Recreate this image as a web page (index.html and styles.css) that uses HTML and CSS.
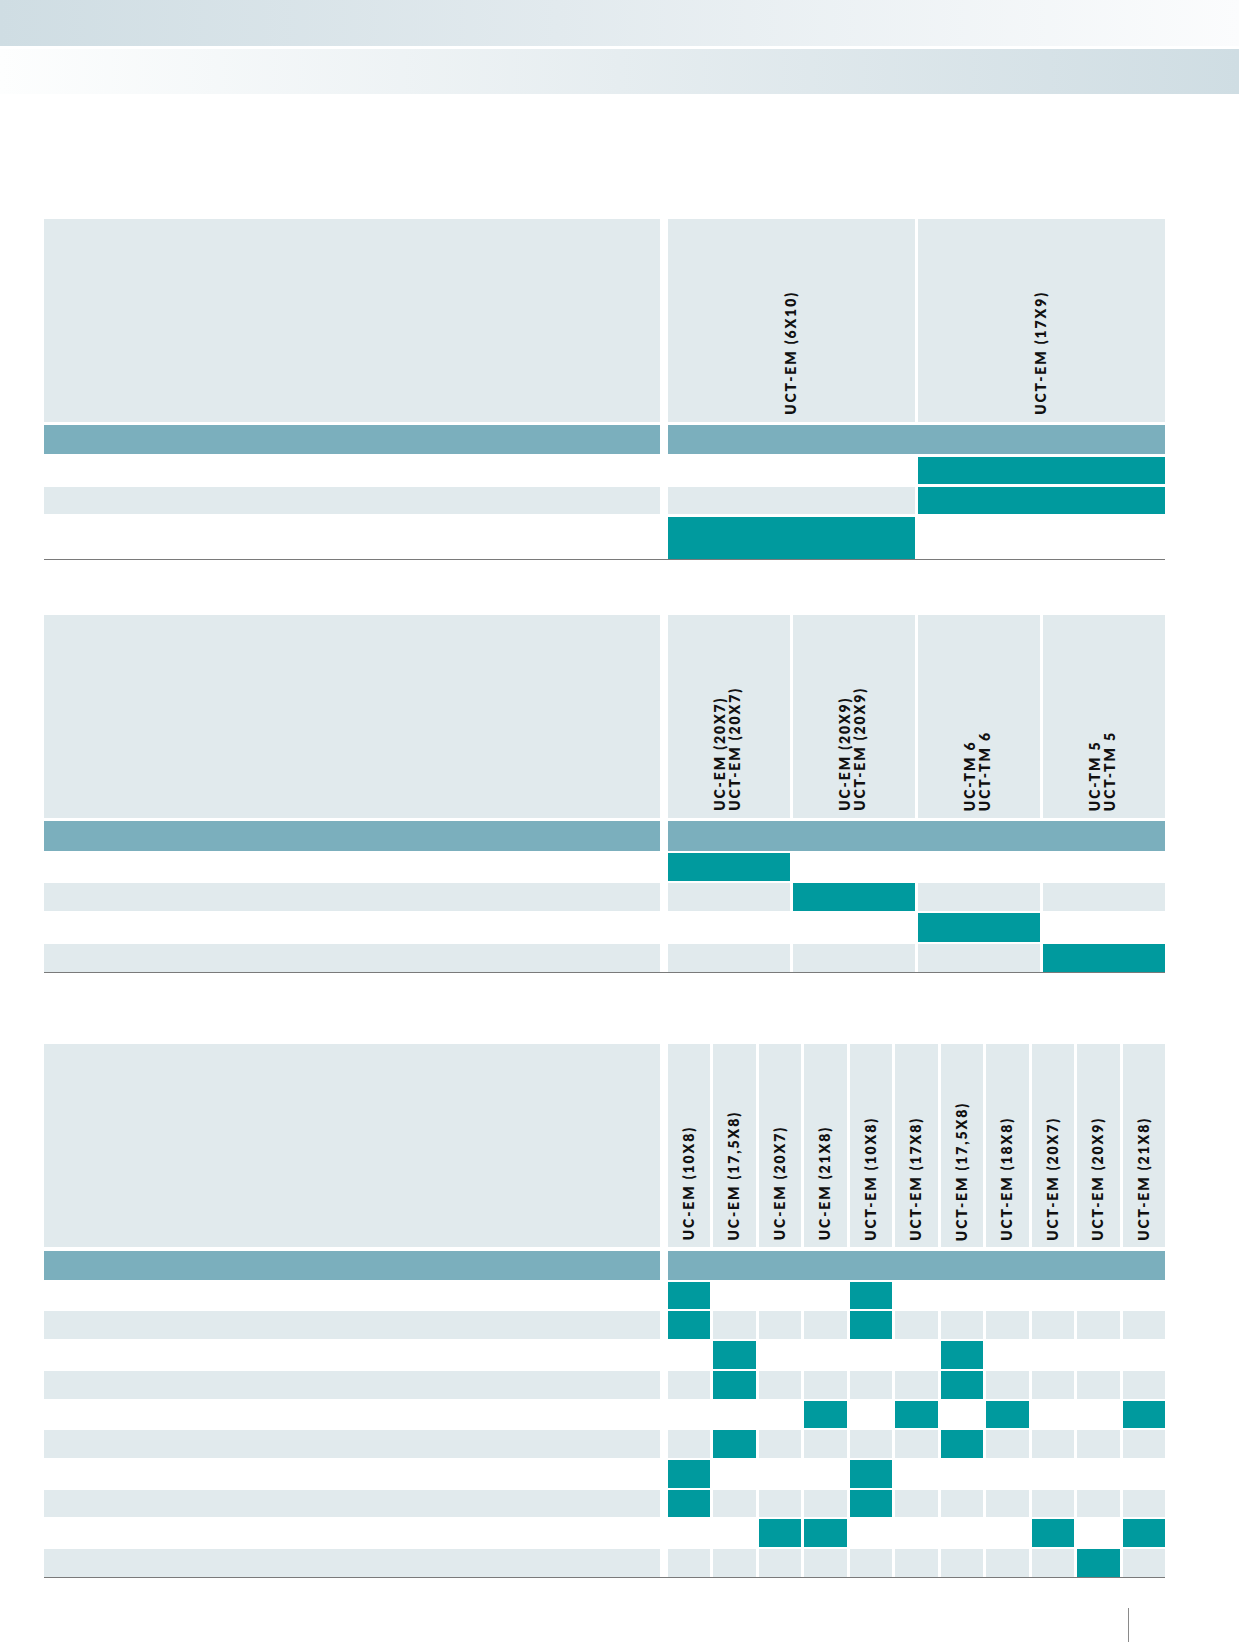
FILE: index.html
```html
<!DOCTYPE html>
<html lang="de">
<head>
<meta charset="utf-8">
<title>Matrix</title>
<link rel="stylesheet" href="styles.css">
</head>
<body>
<div class="band band-top"></div>
<div class="band band-second"></div>

<main class="tables">
  <section class="matrix matrix-1">
    <div class="mrow head">
      <div class="label"></div>
      <div class="cells">
        <div class="cell hcell"><span class="vtext">UCT-EM (6X10)</span></div>
        <div class="cell hcell"><span class="vtext">UCT-EM (17X9)</span></div>
      </div>
    </div>
    <div class="mrow bar"><div class="label"></div><div class="cells"><div class="barfill"></div></div></div>
    <div class="mrow data"><div class="label"></div><div class="cells"><div class="cell"></div><div class="cell on"></div></div></div>
    <div class="mrow data light"><div class="label"></div><div class="cells"><div class="cell"></div><div class="cell on"></div></div></div>
    <div class="mrow data tall"><div class="label"></div><div class="cells"><div class="cell on"></div><div class="cell"></div></div></div>
  </section>

  <section class="matrix matrix-2">
    <div class="mrow head">
      <div class="label"></div>
      <div class="cells">
        <div class="cell hcell"><span class="vtext">UC-EM (20X7)
UCT-EM (20X7)</span></div>
        <div class="cell hcell"><span class="vtext">UC-EM (20X9)
UCT-EM (20X9)</span></div>
        <div class="cell hcell"><span class="vtext">UC-TM 6
UCT-TM 6</span></div>
        <div class="cell hcell"><span class="vtext">UC-TM 5
UCT-TM 5</span></div>
      </div>
    </div>
    <div class="mrow bar"><div class="label"></div><div class="cells"><div class="barfill"></div></div></div>
    <div class="mrow data"><div class="label"></div><div class="cells"><div class="cell on"></div><div class="cell"></div><div class="cell"></div><div class="cell"></div></div></div>
    <div class="mrow data light"><div class="label"></div><div class="cells"><div class="cell"></div><div class="cell on"></div><div class="cell"></div><div class="cell"></div></div></div>
    <div class="mrow data"><div class="label"></div><div class="cells"><div class="cell"></div><div class="cell"></div><div class="cell on"></div><div class="cell"></div></div></div>
    <div class="mrow data light"><div class="label"></div><div class="cells"><div class="cell"></div><div class="cell"></div><div class="cell"></div><div class="cell on"></div></div></div>
  </section>

  <section class="matrix matrix-3">
    <div class="mrow head">
      <div class="label"></div>
      <div class="cells">
        <div class="cell hcell"><span class="vtext">UC-EM (10X8)</span></div>
        <div class="cell hcell"><span class="vtext">UC-EM (17,5X8)</span></div>
        <div class="cell hcell"><span class="vtext">UC-EM (20X7)</span></div>
        <div class="cell hcell"><span class="vtext">UC-EM (21X8)</span></div>
        <div class="cell hcell"><span class="vtext">UCT-EM (10X8)</span></div>
        <div class="cell hcell"><span class="vtext">UCT-EM (17X8)</span></div>
        <div class="cell hcell"><span class="vtext">UCT-EM (17,5X8)</span></div>
        <div class="cell hcell"><span class="vtext">UCT-EM (18X8)</span></div>
        <div class="cell hcell"><span class="vtext">UCT-EM (20X7)</span></div>
        <div class="cell hcell"><span class="vtext">UCT-EM (20X9)</span></div>
        <div class="cell hcell"><span class="vtext">UCT-EM (21X8)</span></div>
      </div>
    </div>
    <div class="mrow bar"><div class="label"></div><div class="cells"><div class="barfill"></div></div></div>
    <div class="mrow data"><div class="label"></div><div class="cells"><div class="cell on"></div><div class="cell"></div><div class="cell"></div><div class="cell"></div><div class="cell on"></div><div class="cell"></div><div class="cell"></div><div class="cell"></div><div class="cell"></div><div class="cell"></div><div class="cell"></div></div></div>
    <div class="mrow data light"><div class="label"></div><div class="cells"><div class="cell on"></div><div class="cell"></div><div class="cell"></div><div class="cell"></div><div class="cell on"></div><div class="cell"></div><div class="cell"></div><div class="cell"></div><div class="cell"></div><div class="cell"></div><div class="cell"></div></div></div>
    <div class="mrow data"><div class="label"></div><div class="cells"><div class="cell"></div><div class="cell on"></div><div class="cell"></div><div class="cell"></div><div class="cell"></div><div class="cell"></div><div class="cell on"></div><div class="cell"></div><div class="cell"></div><div class="cell"></div><div class="cell"></div></div></div>
    <div class="mrow data light"><div class="label"></div><div class="cells"><div class="cell"></div><div class="cell on"></div><div class="cell"></div><div class="cell"></div><div class="cell"></div><div class="cell"></div><div class="cell on"></div><div class="cell"></div><div class="cell"></div><div class="cell"></div><div class="cell"></div></div></div>
    <div class="mrow data"><div class="label"></div><div class="cells"><div class="cell"></div><div class="cell"></div><div class="cell"></div><div class="cell on"></div><div class="cell"></div><div class="cell on"></div><div class="cell"></div><div class="cell on"></div><div class="cell"></div><div class="cell"></div><div class="cell on"></div></div></div>
    <div class="mrow data light"><div class="label"></div><div class="cells"><div class="cell"></div><div class="cell on"></div><div class="cell"></div><div class="cell"></div><div class="cell"></div><div class="cell"></div><div class="cell on"></div><div class="cell"></div><div class="cell"></div><div class="cell"></div><div class="cell"></div></div></div>
    <div class="mrow data"><div class="label"></div><div class="cells"><div class="cell on"></div><div class="cell"></div><div class="cell"></div><div class="cell"></div><div class="cell on"></div><div class="cell"></div><div class="cell"></div><div class="cell"></div><div class="cell"></div><div class="cell"></div><div class="cell"></div></div></div>
    <div class="mrow data light"><div class="label"></div><div class="cells"><div class="cell on"></div><div class="cell"></div><div class="cell"></div><div class="cell"></div><div class="cell on"></div><div class="cell"></div><div class="cell"></div><div class="cell"></div><div class="cell"></div><div class="cell"></div><div class="cell"></div></div></div>
    <div class="mrow data"><div class="label"></div><div class="cells"><div class="cell"></div><div class="cell"></div><div class="cell on"></div><div class="cell on"></div><div class="cell"></div><div class="cell"></div><div class="cell"></div><div class="cell"></div><div class="cell on"></div><div class="cell"></div><div class="cell on"></div></div></div>
    <div class="mrow data light"><div class="label"></div><div class="cells"><div class="cell"></div><div class="cell"></div><div class="cell"></div><div class="cell"></div><div class="cell"></div><div class="cell"></div><div class="cell"></div><div class="cell"></div><div class="cell"></div><div class="cell on"></div><div class="cell"></div></div></div>
  </section>
</main>

<footer class="folio"><span class="folio-rule"></span></footer>
</body>
</html>
```

FILE: styles.css
```css
html, body {
  margin: 0;
  padding: 0;
  background: #ffffff;
}

body {
  font-family: Lato, "Open Sans", "DejaVu Sans", sans-serif;
  color: #111111;
}

.band {
  height: 46px;
}

.band-top {
  background: linear-gradient(90deg, #cfdde3 0%, #e2eaee 45%, #fbfcfd 100%);
}

.band-second {
  margin-top: 3px;
  height: 45px;
  background: linear-gradient(90deg, #fdfefe 0%, #e6edf0 50%, #cfdde3 100%);
}

.tables {
  width: 1121px;
  margin-left: 44px;
  padding-top: 125px;
}

.matrix {
  border-bottom: 1.5px solid #7a7a7a;
}

.matrix-2 {
  margin-top: 55px;
}

.matrix-3 {
  margin-top: 71px;
}

.mrow {
  display: flex;
  margin-top: 3px;
}

.mrow.head {
  margin-top: 0;
  height: 203px;
}

.label {
  flex: none;
  width: 616px;
  margin-right: 8px;
}

.cells {
  flex: 1;
  display: flex;
  gap: 3px;
  min-width: 0;
}

.cell {
  flex: 1 1 0;
  min-width: 0;
}

.head .label,
.head .cell {
  background: #e1eaed;
}

.hcell {
  display: flex;
  justify-content: center;
  align-items: flex-end;
  padding-bottom: 7px;
  box-sizing: border-box;
}

.matrix-2 .hcell {
  padding-right: 3px;
}

.matrix-3 .hcell {
  padding-bottom: 6px;
}

.vtext {
  writing-mode: vertical-rl;
  transform: rotate(180deg);
  font-size: 14px;
  font-weight: 800;
  letter-spacing: 1.9px;
  line-height: 14.5px;
  white-space: pre;
  color: #111111;
}

.bar {
  height: 29px;
}

.matrix-2 .bar {
  height: 30px;
}

.matrix-3 .bar {
  margin-top: 4px;
}

.bar .label,
.barfill {
  background: #7bafbd;
}

.barfill {
  flex: 1;
}

.data {
  height: 27px;
}

.data.tall {
  height: 42px;
}

.matrix-2 .data {
  margin-top: 2px;
  height: 28.2px;
}

.matrix-3 .data {
  margin-top: 2px;
  height: 27.7px;
}

.data.light .label,
.data.light .cell {
  background: #e1eaed;
}

.data .cell.on {
  background: #009a9e;
}

.folio {
  margin-top: 30px;
  height: 34px;
}

.folio-rule {
  display: block;
  margin-left: 1128px;
  width: 0;
  height: 34px;
  border-left: 1.5px solid #8a8a8a;
}
```
